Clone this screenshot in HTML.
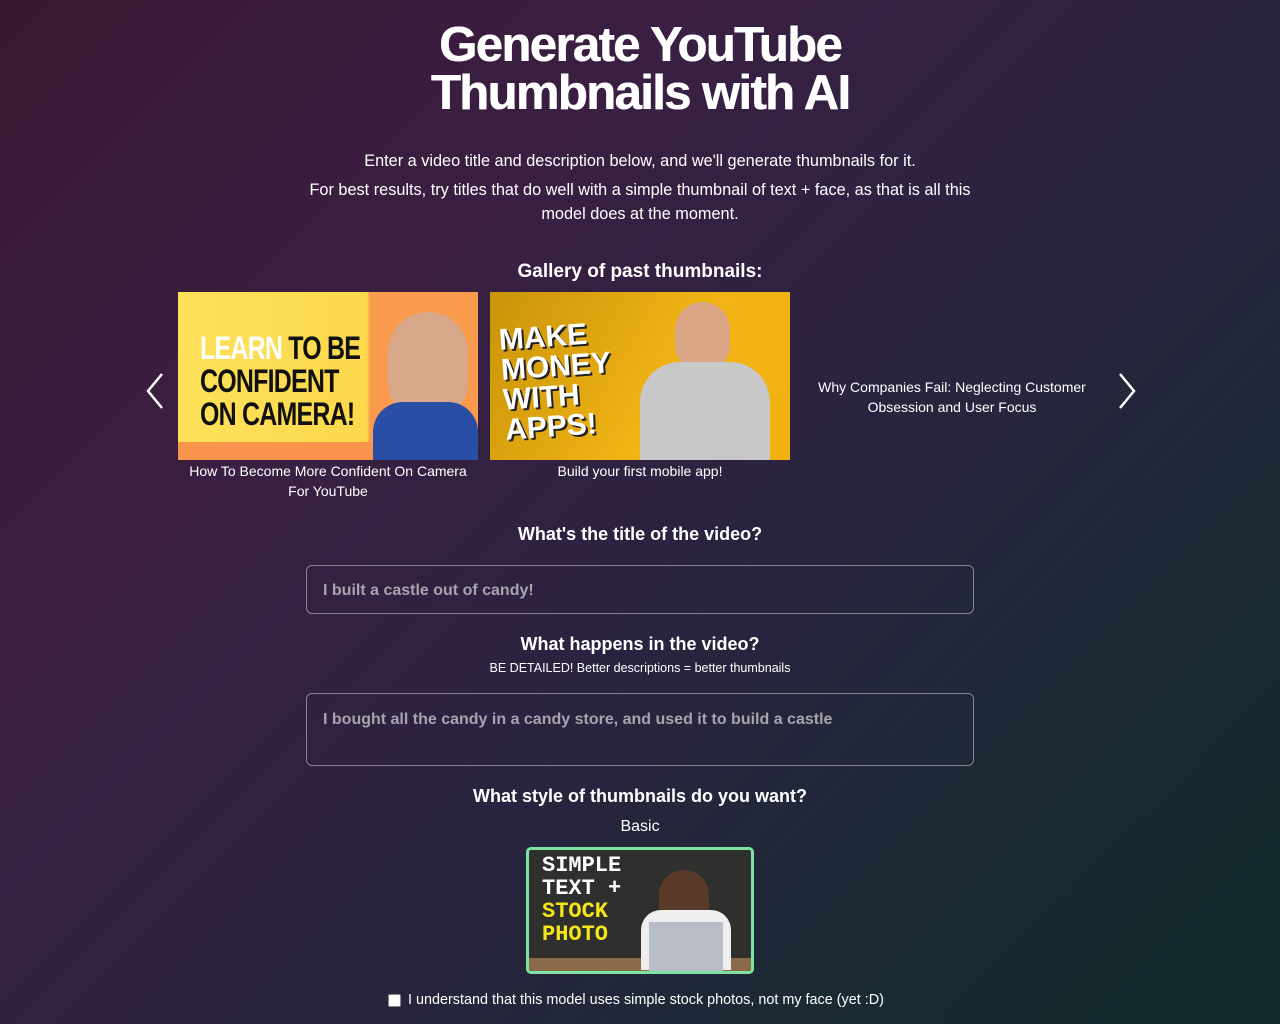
<!DOCTYPE html>
<html><head><meta charset="utf-8"><style>
*{box-sizing:border-box;margin:0;padding:0}
body{width:1280px;height:1024px;overflow:hidden;font-family:"Liberation Sans",sans-serif;color:#fff;
background:linear-gradient(135deg,#3a1832 0%,#3a1f42 30%,#2a2340 55%,#1b2a33 80%,#112a2a 100%);position:relative}
.a{position:absolute}
h1{position:absolute;top:21px;left:0;width:1280px;text-align:center;font-size:49px;line-height:48px;font-weight:bold;letter-spacing:-1.6px;text-shadow:0.6px 0 0 #fff}
.c{position:absolute;left:0;width:1280px;text-align:center}
.in{position:absolute;left:306px;width:668px;border:1px solid #8a8590;border-radius:6px;color:#a8a3ad;font-size:16px;font-weight:bold;padding-left:16px}
.cap{font-size:14px;line-height:20px;text-align:center}
</style></head><body>
<h1>Generate YouTube<br>Thumbnails with AI</h1>
<div class="c" style="top:151px;font-size:16.3px;line-height:20px">Enter a video title and description below, and we'll generate thumbnails for it.</div>
<div class="a" style="left:290px;width:700px;top:178px;font-size:16.3px;line-height:24px;text-align:center">For best results, try titles that do well with a simple thumbnail of text + face, as that is all this model does at the moment.</div>
<div class="c" style="top:261px;font-size:19px;font-weight:bold">Gallery of past thumbnails:</div>
<svg class="a" style="left:140px;top:370px" width="30" height="42"><path d="M22 4 L8 21 L22 38" stroke="#fff" stroke-width="2.5" fill="none"/></svg>
<svg class="a" style="left:1112px;top:370px" width="30" height="42"><path d="M8 4 L22 21 L8 38" stroke="#fff" stroke-width="2.5" fill="none"/></svg>
<div class="a" style="left:178px;top:292px;width:300px;height:168px;background:linear-gradient(90deg,#fde05a 0%,#fcd94c 63%,#f99a4c 64%,#f99a4c 100%);overflow:hidden">
<div class="a" style="left:0;top:150px;width:300px;height:18px;background:#f9944c"></div>
<div class="a" style="left:210px;top:20px;width:80px;height:110px;border-radius:40px;background:#d9a88a"></div>
<div class="a" style="left:195px;top:110px;width:105px;height:70px;background:#2a4ea5;border-radius:30px 30px 0 0"></div>
<div class="a" style="left:22px;top:40px;font:bold 32px/33px 'Liberation Sans',sans-serif;color:#111;letter-spacing:-1px;transform:scaleX(0.78);transform-origin:left"><span style="color:#fff">LEARN</span> TO BE<br>CONFIDENT<br>ON CAMERA!</div></div>
<div class="a" style="left:490px;top:292px;width:300px;height:168px;background:linear-gradient(120deg,#c9940a,#f2b515 60%,#f0b010);overflow:hidden">
<div class="a" style="left:185px;top:10px;width:55px;height:70px;border-radius:28px;background:#d9a584"></div>
<div class="a" style="left:150px;top:70px;width:130px;height:100px;border-radius:40px 40px 0 0;background:#c8c8c8"></div>
<div class="a" style="left:12px;top:30px;font:900 30px/30px 'Liberation Sans',sans-serif;color:#fff;transform:rotate(-4deg);text-shadow:2px 2px 0 #222">MAKE<br>MONEY<br>WITH<br>APPS!</div></div>
<div class="a cap" style="left:178px;top:461px;width:300px">How To Become More Confident On Camera For YouTube</div>
<div class="a cap" style="left:490px;top:461px;width:300px">Build your first mobile app!</div>
<div class="a cap" style="left:802px;top:377px;width:300px">Why Companies Fail: Neglecting Customer Obsession and User Focus</div>
<div class="c" style="top:524px;font-size:18px;font-weight:bold">What's the title of the video?</div>
<div class="in" style="top:565px;height:49px;line-height:50px">I built a castle out of candy!</div>
<div class="c" style="top:634px;font-size:18px;font-weight:bold">What happens in the video?</div>
<div class="c" style="top:661px;font-size:12.5px">BE DETAILED! Better descriptions = better thumbnails</div>
<div class="in" style="top:693px;height:73px;padding-top:16px;line-height:20px">I bought all the candy in a candy store, and used it to build a castle</div>
<div class="c" style="top:786px;font-size:18px;font-weight:bold">What style of thumbnails do you want?</div>
<div class="c" style="top:818px;font-size:16px">Basic</div>
<div class="a" style="left:526px;top:847px;width:228px;height:127px;border:3px solid #7ee2a4;border-radius:5px;background:#2f302e;overflow:hidden">
<div class="a" style="left:0;top:108px;width:222px;height:16px;background:#8a6a48"></div>
<div class="a" style="left:130px;top:20px;width:50px;height:70px;border-radius:25px;background:#5a3a28"></div>
<div class="a" style="left:112px;top:60px;width:90px;height:60px;border-radius:20px 20px 0 0;background:#eee"></div>
<div class="a" style="left:120px;top:72px;width:74px;height:50px;background:#b8bcc4"></div>
<div class="a" style="left:13px;top:4px;font:bold 22px/23px 'Liberation Mono',monospace;color:#fff">SIMPLE<br>TEXT +<br><span style="color:#f5e61a">STOCK<br>PHOTO</span></div></div>
<div class="a" style="left:388px;top:994px;width:13px;height:13px;background:#fff;border:1px solid #888;border-radius:2px"></div>
<div class="a" style="left:408px;top:992px;font-size:14.4px">I understand that this model uses simple stock photos, not my face (yet :D)</div>
</body></html>
